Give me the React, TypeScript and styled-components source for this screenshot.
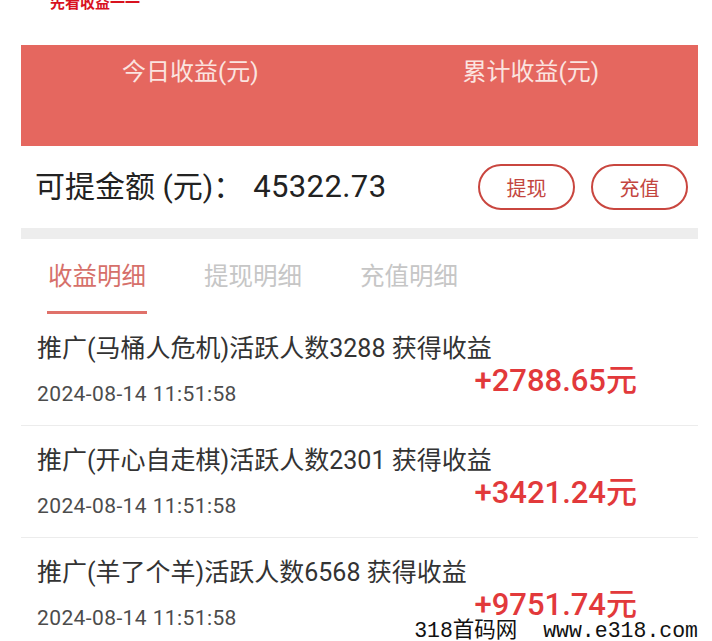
import React from "react";
import styled, { createGlobalStyle } from "styled-components";

const Global = createGlobalStyle`
  html, body { margin: 0; padding: 0; background: #ffffff; }
  body { font-family: Roboto, "Noto Sans CJK SC", sans-serif; }
  * { box-sizing: border-box; }
`;

const Page = styled.div`
  position: relative;
  width: 712px;
  height: 641px;
  overflow: hidden;
  background: #ffffff;
`;

const TopNote = styled.div`
  margin-top: -6px;
  padding-left: 50px;
  font-size: 15px;
  line-height: 15px;
  font-weight: 700;
  color: #d8121f;
  font-family: "Noto Sans CJK SC", sans-serif;
`;

const Main = styled.div`
  width: 677px;
  margin-left: 21px;
`;

const Banner = styled.div`
  margin-top: 36px;
  height: 101px;
  background: #e5675f;
  display: grid;
  grid-template-columns: 1fr 1fr;
  padding-top: 13px;
`;

const BannerLabel = styled.div<{ $shift: number }>`
  text-align: center;
  font-size: 24px;
  line-height: 28px;
  color: #fbe4e0;
  padding-left: ${(p) => p.$shift}px;
`;

const BalanceRow = styled.div`
  height: 82px;
  display: flex;
  align-items: center;
  padding: 0 10px 0 14px;
`;

const Balance = styled.div`
  flex: 1;
  font-size: 30px;
  line-height: 36px;
  color: #222222;
  white-space: pre;
`;

const BalanceValue = styled.span`
  margin-left: 10px;
  font-size: 31px;
  letter-spacing: 0.4px;
`;

const Buttons = styled.div`
  display: flex;
  gap: 16px;
`;

const OutlineButton = styled.button`
  width: 97px;
  height: 46px;
  border: 2px solid #c9463f;
  border-radius: 23px;
  background: #ffffff;
  color: #c3463f;
  font-family: "Noto Sans CJK SC", sans-serif;
  font-size: 20px;
  padding: 0;
  cursor: pointer;
`;

const Divider = styled.div`
  height: 11px;
  background: #ededed;
`;

const Tabs = styled.div`
  display: flex;
  gap: 58px;
  padding-left: 27px;
  height: 75px;
`;

const Tab = styled.div<{ $active?: boolean }>`
  position: relative;
  padding-top: 20px;
  font-size: 24.5px;
  line-height: 32px;
  color: ${(p) => (p.$active ? "#d6706a" : "#c6c6c6")};
  font-family: "Noto Sans CJK SC", sans-serif;
  &::after {
    content: "";
    display: ${(p) => (p.$active ? "block" : "none")};
    position: absolute;
    left: -1px;
    right: -1px;
    bottom: 0;
    height: 3px;
    background: #e0716a;
  }
`;

const Item = styled.div`
  height: 112px;
  border-bottom: 1px solid #ececec;
  padding: 18px 61px 0 16px;
`;

const Title = styled.div`
  font-size: 25px;
  line-height: 34px;
  color: #333333;
  white-space: nowrap;
`;

const Bottom = styled.div`
  display: flex;
  justify-content: space-between;
  align-items: flex-start;
`;

const DateText = styled.div`
  margin-top: 16px;
  font-size: 21px;
  line-height: 24px;
  letter-spacing: 0.4px;
  color: #4c4c4c;
`;

const Amount = styled.div`
  font-size: 31px;
  line-height: 29px;
  font-weight: 500;
  color: #e2393b;
`;

const Watermark = styled.div`
  position: absolute;
  right: 14px;
  bottom: 0;
  font-family: "Liberation Mono", "Noto Sans CJK SC", monospace;
  font-size: 21.5px;
  line-height: 20px;
  color: #111111;
  white-space: pre;
`;

const items = [
  { title: "推广(马桶人危机)活跃人数3288 获得收益", amount: "+2788.65元" },
  { title: "推广(开心自走棋)活跃人数2301 获得收益", amount: "+3421.24元" },
  { title: "推广(羊了个羊)活跃人数6568 获得收益", amount: "+9751.74元" },
];

export default function App() {
  return (
    <Page>
      <Global />
      <TopNote>先看收益一一</TopNote>
      <Main>
        <Banner>
          <BannerLabel $shift={0}>今日收益(元)</BannerLabel>
          <BannerLabel $shift={4}>累计收益(元)</BannerLabel>
        </Banner>
        <BalanceRow>
          <Balance>
            可提金额 (元)：<BalanceValue>45322.73</BalanceValue>
          </Balance>
          <Buttons>
            <OutlineButton>提现</OutlineButton>
            <OutlineButton>充值</OutlineButton>
          </Buttons>
        </BalanceRow>
        <Divider />
        <Tabs>
          <Tab $active>收益明细</Tab>
          <Tab>提现明细</Tab>
          <Tab>充值明细</Tab>
        </Tabs>
        {items.map((it) => (
          <Item key={it.title}>
            <Title>{it.title}</Title>
            <Bottom>
              <DateText>2024-08-14 11:51:58</DateText>
              <Amount>{it.amount}</Amount>
            </Bottom>
          </Item>
        ))}
      </Main>
      <Watermark>318首码网  www.e318.com</Watermark>
    </Page>
  );
}
